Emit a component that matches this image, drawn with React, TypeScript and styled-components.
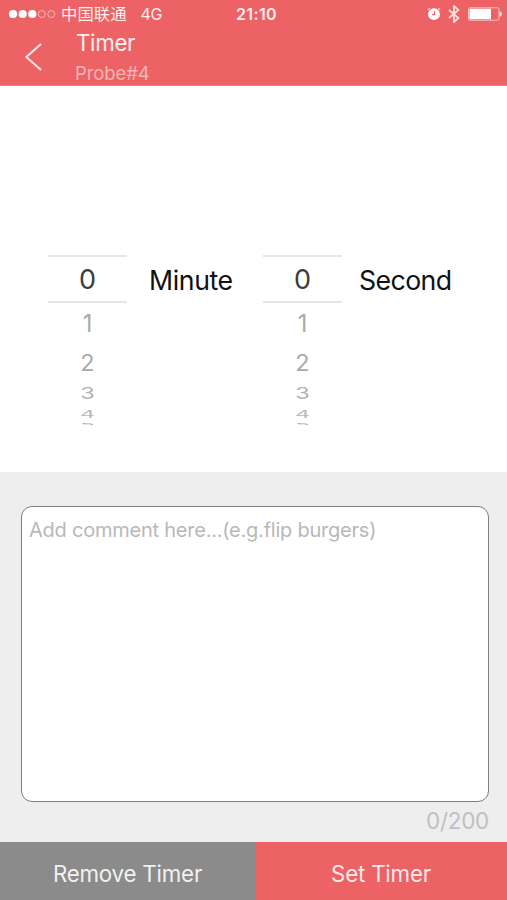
import React from "react";
import styled, { createGlobalStyle } from "styled-components";

const GlobalStyle = createGlobalStyle`
  * { box-sizing: border-box; }
  html, body { margin: 0; padding: 0; }
  body {
    font-family: Inter, "Noto Sans CJK SC", sans-serif;
    background: #fff;
    font-feature-settings: "calt" 0;
  }
`;

const Screen = styled.main`
  width: 507px;
  height: 900px;
  display: flex;
  flex-direction: column;
  overflow: hidden;
  background: #fff;
`;

const Header = styled.header`
  height: 86px;
  flex: none;
  background: #ed6264;
  color: #fdeeee;
  border-bottom: 1px solid #e58586;
`;

const StatusBar = styled.div`
  height: 28px;
  display: grid;
  grid-template-columns: 1fr auto 1fr;
  align-items: center;
  padding: 0 5px 0 9px;
`;

const Carrier = styled.div`
  display: flex;
  align-items: center;
  font-size: 16px;
  line-height: 28px;
  white-space: nowrap;
`;

const Dots = styled.svg`
  width: 47px;
  height: 10px;
  margin-right: 5px;
`;

const Operator = styled.span`
  font-family: "Noto Sans CJK SC", sans-serif;
  font-size: 16.4px;
  line-height: 26px;
  padding-bottom: 2px;
  margin-right: 14px;
`;

const Network = styled.span`
  font-size: 16px;
  letter-spacing: -0.4px;
`;

const Clock = styled.time`
  font-size: 16px;
  font-weight: 600;
  letter-spacing: 0.4px;
  padding-left: 2px;
`;

const StatusIcons = styled.div`
  display: flex;
  justify-content: flex-end;
  align-items: center;
`;

const AlarmIcon = styled.svg`
  width: 14px;
  height: 14px;
  margin-right: 7px;
`;

const BluetoothIcon = styled.svg`
  width: 12px;
  height: 18px;
  margin-right: 8px;
`;

const BatteryIcon = styled.svg`
  width: 34px;
  height: 14px;
`;

const NavBar = styled.div`
  height: 57px;
  display: flex;
`;

const BackButton = styled.button`
  width: 75px;
  height: 57px;
  border: 0;
  padding: 0 0 0 24px;
  background: none;
  color: inherit;
  display: flex;
  align-items: center;
`;

const Titles = styled.div`
  display: flex;
  flex-direction: column;
`;

const Title = styled.h1`
  margin: 0;
  font-size: 22.3px;
  font-weight: 400;
  line-height: 30px;
  letter-spacing: -0.3px;
  padding-left: 1px;
`;

const Subtitle = styled.span`
  font-size: 18.5px;
  line-height: 30px;
  letter-spacing: -0.1px;
  color: #f2b5b6;
`;

const Pickers = styled.section`
  height: 386px;
  flex: none;
  display: grid;
  grid-template-columns: 79px 136px 79px 1fr;
  align-items: start;
  padding: 169px 0 0 48px;
`;

const Wheel = styled.div`
  display: flex;
  flex-direction: column;
`;

const Selected = styled.div`
  height: 48px;
  border-top: 2px solid #e6e6e6;
  border-bottom: 2px solid #e6e6e6;
  display: flex;
  align-items: center;
  justify-content: center;
  padding-top: 2px;
  font-size: 27px;
  line-height: 42px;
  color: #3c3c3c;
`;

const WheelItem = styled.div<{ $height: number; $squash: number; $tone: string }>`
  height: ${(p) => p.$height}px;
  display: flex;
  align-items: center;
  justify-content: center;
  color: ${(p) => p.$tone};
  font-size: 23.5px;
  line-height: 28px;

  span {
    flex: none;
    transform: scaleY(${(p) => p.$squash});
  }
`;

const Unit = styled.span`
  font-size: 26.7px;
  line-height: 50px;
  letter-spacing: -0.4px;
  color: #111;
  padding-left: 22px;
`;

const UnitWide = styled(Unit)`
  padding-left: 17px;
  letter-spacing: -0.6px;
`;

const CommentArea = styled.section`
  flex: 1;
  background: #eee;
  padding: 34px 18px 0 21px;
`;

const CommentBox = styled.textarea`
  display: block;
  width: 468px;
  height: 296px;
  resize: none;
  border: 1.5px solid #7e7e7e;
  border-radius: 11px;
  background: #fff;
  padding: 11px 7px;
  font: 400 20px/24px Inter, sans-serif;
  letter-spacing: -0.23px;
  outline: none;

  &::placeholder {
    color: #b8b8b8;
    opacity: 1;
  }
`;

const Counter = styled.div`
  text-align: right;
  font-size: 22.5px;
  letter-spacing: -0.3px;
  line-height: 38px;
  color: #c0c0c0;
`;

const Actions = styled.footer`
  height: 58px;
  flex: none;
  display: grid;
  grid-template-columns: 255px 1fr;
`;

const ActionButton = styled.button<{ $primary?: boolean }>`
  border: 0;
  padding: 6px 0 0;
  background: ${(p) => (p.$primary ? "#ed6264" : "#8b8b8b")};
  color: ${(p) => (p.$primary ? "#fde9e9" : "#f1f1f1")};
  font: 400 22.3px/28px Inter, sans-serif;
  letter-spacing: -0.2px;
`;

const steps = [
  { label: "1", height: 41, squash: 1.06, tone: "#aaa" },
  { label: "2", height: 37, squash: 0.95, tone: "#aaa" },
  { label: "3", height: 26, squash: 0.67, tone: "#b2b2b2" },
  { label: "4", height: 14, squash: 0.44, tone: "#bababa" },
  { label: "5", height: 5, squash: 0.11, tone: "#a8a8a8" },
];

function NumberWheel() {
  return (
    <Wheel>
      <Selected>0</Selected>
      {steps.map((s) => (
        <WheelItem key={s.label} $height={s.height} $squash={s.squash} $tone={s.tone}>
          <span>{s.label}</span>
        </WheelItem>
      ))}
    </Wheel>
  );
}

export default function App() {
  return (
    <>
      <GlobalStyle />
      <Screen>
        <Header>
          <StatusBar>
            <Carrier>
              <Dots viewBox="0 0 47 10">
                {[4, 13.7, 23.3].map((x) => (
                  <circle key={x} cx={x} cy="5" r="4.1" fill="#fff" />
                ))}
                {[32.8, 42.3].map((x) => (
                  <circle key={x} cx={x} cy="5" r="3.5" fill="none" stroke="#f6b9b4" strokeWidth="1" />
                ))}
              </Dots>
              <Operator>中国联通</Operator>
              <Network>4G</Network>
            </Carrier>
            <Clock>21:10</Clock>
            <StatusIcons>
              <AlarmIcon viewBox="0 0 14 14" fill="none">
                <circle cx="7" cy="7.2" r="5.9" fill="#fff" />
                <path d="M0.8 3.2 3 1M13.2 3.2 11 1" stroke="#f9c5c5" strokeWidth="1.2" />
                <path d="M7.6 4.2V7.6H4.9" stroke="#ed6264" strokeWidth="1.1" />
              </AlarmIcon>
              <BluetoothIcon viewBox="0 0 12 18" fill="none">
                <path d="M1 5 10.5 13 6 17V1L10.5 5 1 13" stroke="#fde3e3" strokeWidth="1.7" />
              </BluetoothIcon>
              <BatteryIcon viewBox="0 0 34 14">
                <rect x="0.5" y="0.8" width="30.5" height="12.4" rx="1.6" fill="none" stroke="#f8c4c4" />
                <rect x="1.5" y="1.8" width="21.5" height="10.4" fill="#fff" />
                <path d="M31.5 4.2Q34 5 34 7T31.5 9.8Z" fill="#fbdada" />
              </BatteryIcon>
            </StatusIcons>
          </StatusBar>
          <NavBar>
            <BackButton aria-label="Back">
              <svg width="19" height="28" viewBox="0 0 19 28" fill="none">
                <path d="M17 1 2.3 14 17 27" stroke="#fdeaea" strokeWidth="2" />
              </svg>
            </BackButton>
            <Titles>
              <Title>Timer</Title>
              <Subtitle>Probe#4</Subtitle>
            </Titles>
          </NavBar>
        </Header>
        <Pickers>
          <NumberWheel />
          <Unit>Minute</Unit>
          <NumberWheel />
          <UnitWide>Second</UnitWide>
        </Pickers>
        <CommentArea>
          <CommentBox placeholder="Add comment here...(e.g.flip burgers)" />
          <Counter>0/200</Counter>
        </CommentArea>
        <Actions>
          <ActionButton>Remove Timer</ActionButton>
          <ActionButton $primary>Set Timer</ActionButton>
        </Actions>
      </Screen>
    </>
  );
}
